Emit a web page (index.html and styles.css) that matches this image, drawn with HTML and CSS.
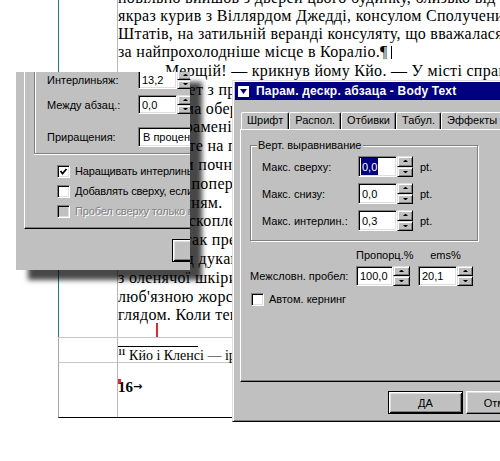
FILE: index.html
```html
<!DOCTYPE html>
<html lang="uk">
<head>
<meta charset="utf-8">
<title>Парам. дескр. абзаца - Body Text</title>
<link rel="stylesheet" href="styles.css">
</head>
<body>
<main class="doc">
  <section class="sheet">
    <div class="gutter"></div>
    <div class="text-col">
      <p class="para first">
        <span class="ln">повільно вийшов з дверей цього будинку, близько від Рудих. Б</span>
        <span class="ln">якраз курив з Віллярдом Джедді, консулом Сполучених</span>
        <span class="ln">Штатів, на затильній веранді консуляту, що вважалася</span>
        <span class="ln">за найпрохолодніше місце в Кораліо.¶<i class="caret"></i></span>
      </p>
      <p class="para second">
        <span class="ln indent">Мерщій! — крикнув йому Кйо. — У місті справжнє свято</span>
        <span class="ln">Везли пакет з пристані, там щось небачене. Ходімо</span>
        <span class="ln">Кожна дама обертається, щоб подивитися на нього</span>
        <span class="ln">Дехто на рамені несе по кошику, і всі кричать</span>
        <span class="ln">Поспішайте на площу, там саме</span>
        <span class="ln">Незабаром почнеться свято</span>
        <span class="ln">І жодного попередження</span>
        <span class="ln">з привітанням.</span>
        <span class="ln">На площі скоплення людей</span>
        <span class="ln">Все було так прекрасно</span>
        <span class="ln">Там, перед дуканом</span>
        <span class="ln">з оленячої шкіри, що сиділи на лавах</span>
        <span class="ln">люб'язною жорстокістю</span>
        <span class="ln">глядом. Коли тепер</span>
      </p>
      <i class="red-mark"></i>
    </div>
  </section>
  <section class="note-row">
    <div class="gutter"></div>
    <div class="note-col">
      <hr class="note-rule">
      <p class="note"><sup>11</sup> Кйо і Кленсі — ірландці</p>
    </div>
  </section>
  <section class="num-row">
    <div class="gutter"></div>
    <div class="num-col"><span class="pin"></span>16<span class="tab-arrow">→</span></div>
  </section>
</main>

<div class="ldlg">
  <div class="lpanel">
    <div class="lgroup">
      <div class="lrow r1">
        <span class="lbl">Интерлиньяж:</span>
        <span class="field w39">13,2</span>
        <span class="spinner"><i class="up"></i><i class="dn"></i></span>
      </div>
      <div class="lrow r2">
        <span class="lbl">Между абзац.:</span>
        <span class="field w39">0,0</span>
        <span class="spinner"><i class="up"></i><i class="dn"></i></span>
      </div>
      <div class="lrow r3">
        <span class="lbl">Приращения:</span>
        <span class="field combo">В процентах</span>
      </div>
    </div>
    <div class="chk-list">
      <div class="chk"><span class="box"><svg viewBox="0 0 9 9" width="9" height="9"><polyline points="1.5,4 3.5,6.5 7.5,2" fill="none" stroke="#000" stroke-width="1.8"/></svg></span>Наращивать интерлиньяж</div>
      <div class="chk"><span class="box"></span>Добавлять сверху, если первая строка</div>
      <div class="chk disabled"><span class="box"></span>Пробел сверху только в начале колонки</div>
    </div>
  </div>
  <div class="lbtns"><span class="btn def">ДА</span></div>
</div>

<div class="dlg">
  <div class="titlebar">
    <span class="sysicon"><svg viewBox="0 0 11 11" width="11" height="11"><rect x="0" y="0" width="11" height="11" fill="#fff"/><polygon points="2,3 9,3 5.5,8" fill="#000080"/></svg></span>
    <span class="title">Парам. дескр. абзаца - Body Text</span>
  </div>
  <div class="tabs">
    <div class="tab">Шрифт</div>
    <div class="tab">Распол.</div>
    <div class="tab">Отбивки</div>
    <div class="tab">Табул.</div>
    <div class="tab">Эффекты</div>
    <div class="tab">Интервалы</div>
  </div>
  <div class="panel">
    <fieldset class="group">
      <legend>Верт. выравнивание</legend>
      <div class="vrow">
        <span class="vlbl">Макс. сверху:</span>
        <span class="field w39"><span class="sel">0,0</span></span>
        <span class="spinner"><i class="up"></i><i class="dn"></i></span>
        <span class="unit">pt.</span>
      </div>
      <div class="vrow">
        <span class="vlbl">Макс. снизу:</span>
        <span class="field w39">0,0</span>
        <span class="spinner"><i class="up"></i><i class="dn"></i></span>
        <span class="unit">pt.</span>
      </div>
      <div class="vrow">
        <span class="vlbl">Макс. интерлин.:</span>
        <span class="field w39">0,3</span>
        <span class="spinner"><i class="up"></i><i class="dn"></i></span>
        <span class="unit">pt.</span>
      </div>
    </fieldset>
    <div class="ws-head">
      <span></span>
      <span class="h-prop">Пропорц.%</span>
      <span class="h-ems">ems%</span>
    </div>
    <div class="ws-row">
      <span class="ws-lbl">Межсловн. пробел:</span>
      <span class="pair"><span class="field w37">100,0</span><span class="spinner s17"><i class="up"></i><i class="dn"></i></span></span>
      <span class="pair"><span class="field w39">20,1</span><span class="spinner"><i class="up"></i><i class="dn"></i></span></span>
    </div>
    <div class="chk kern"><span class="box"></span>Автом. кернинг</div>
  </div>
  <div class="btns">
    <span class="btn def">ДА</span>
    <span class="btn">Отмена</span>
  </div>
</div>
</body>
</html>
```

FILE: styles.css
```css
body {
  margin: 0;
  width: 500px;
  height: 461px;
  overflow: hidden;
  position: relative;
  background: #fff;
  font-family: "Liberation Sans", Arial, sans-serif;
  font-size: 11px;
  color: #000;
}

/* ---------- background document ---------- */
.doc {
  margin-left: 58px;
  width: 480px;
}
.sheet {
  display: grid;
  grid-template-columns: 58px 1fr;
  height: 337px;
  border-left: 1px solid #0d8585;
}
.text-col {
  border-left: 1px solid #b8b8b8;
  overflow: hidden;
  font-family: "Liberation Serif", "Times New Roman", serif;
  font-size: 16px;
  letter-spacing: 0.3px;
  color: #000;
}
.para { margin: 0; }
.ln { display: block; white-space: nowrap; }
.first { line-height: 18px; margin-top: -11.4px; }
.second { line-height: 18.8px; margin-top: 1.4px; }
.indent { text-indent: 47px; }
.caret {
  display: inline-block;
  width: 1px;
  height: 13px;
  margin-left: 3px;
  background: #000;
  vertical-align: -2px;
}
.red-mark {
  display: block;
  width: 2px;
  height: 14px;
  margin-left: 38px;
  margin-top: -2px;
  background: #e0283a;
}

.note-row {
  display: grid;
  grid-template-columns: 58px 1fr;
  box-sizing: border-box;
  height: 25px;
  border-top: 1px solid #c8c8c8;
  border-left: 1px solid #a8a8a8;
}
.note-col { border-left: 1px solid #b8b8b8; }
.note-rule {
  border: 0;
  margin: 8px 0 0;
  width: 80px;
  height: 1px;
  background: #000;
}
.note {
  margin: 2px 0 0;
  font-family: "Liberation Serif", "Times New Roman", serif;
  font-size: 14px;
  line-height: 14px;
  white-space: nowrap;
}
.note sup {
  font-size: 8px;
  font-weight: bold;
  vertical-align: top;
  line-height: 8px;
}

.num-row {
  display: grid;
  grid-template-columns: 58px 1fr;
  box-sizing: border-box;
  height: 56px;
  border-top: 1px solid #c8c8c8;
  border-bottom: 1px solid #000;
  border-left: 1px solid #a8a8a8;
}
.num-col {
  border-left: 1px solid #b8b8b8;
  padding-top: 16px;
  font-family: "Liberation Serif", "Times New Roman", serif;
  font-size: 15px;
  font-weight: bold;
  line-height: 15px;
}
.pin {
  display: inline-block;
  width: 3px;
  height: 5px;
  margin-right: -3px;
  background: #e0283a;
  vertical-align: 8px;
}
.tab-arrow {
  font-size: 11px;
  font-weight: bold;
  font-family: "DejaVu Sans", sans-serif;
  vertical-align: 2px;
}

/* ---------- Win95 pieces ---------- */
.field {
  display: flex;
  align-items: center;
  box-sizing: border-box;
  background: #fff;
  border: 1px solid;
  border-color: #808080 #fff #fff #808080;
  box-shadow: inset 1px 1px #000, inset -1px -1px #dfdfdf;
  padding-left: 3px;
  white-space: nowrap;
  overflow: hidden;
}
.w39 { width: 39px; }
.w37 { width: 37px; }
.sel {
  align-self: stretch;
  display: flex;
  align-items: center;
  margin: 1px 0 1px -1px;
  padding: 0 1px;
  background: #000080;
  color: #fff;
}
.spinner {
  display: flex;
  flex-direction: column;
  flex: none;
  width: 16px;
  align-self: stretch;
}
.spinner.s17 { width: 17px; }
.spinner i {
  flex: 1;
  display: flex;
  align-items: center;
  justify-content: center;
  box-sizing: border-box;
  background: #c0c0c0;
  border: 1px solid;
  border-color: #dfdfdf #000 #000 #dfdfdf;
  box-shadow: inset 1px 1px #fff, inset -1px -1px #808080;
}
.spinner i::after {
  content: "";
  width: 1px;
  height: 0;
  border-left: 2px solid transparent;
  border-right: 2px solid transparent;
}
.spinner .up::after { border-bottom: 2px solid #000; }
.spinner .dn::after { border-top: 2px solid #000; }

.btn {
  display: flex;
  align-items: center;
  justify-content: center;
  box-sizing: border-box;
  width: 75px;
  height: 23px;
  background: #c0c0c0;
  border: 1px solid;
  border-color: #fff #000 #000 #fff;
  box-shadow: inset -1px -1px #808080, inset 1px 1px #dfdfdf;
  font-size: 11px;
}
.btn.def {
  border: 1px solid #000;
  box-shadow: inset 1px 1px #fff, inset -1px -1px #000, inset 2px 2px #dfdfdf, inset -2px -2px #808080;
}

.chk {
  display: flex;
  align-items: center;
  gap: 5px;
  white-space: nowrap;
}
.box {
  flex: none;
  display: flex;
  align-items: center;
  justify-content: center;
  box-sizing: border-box;
  width: 13px;
  height: 13px;
  background: #fff;
  border: 1px solid;
  border-color: #808080 #fff #fff #808080;
  box-shadow: inset 1px 1px #000, inset -1px -1px #dfdfdf;
}
.chk.disabled { color: #808080; text-shadow: 1px 1px 0 #fff; }
.chk.disabled .box { background: #c0c0c0; }

/* ---------- left (cropped) dialog ---------- */
.ldlg {
  position: absolute;
  left: 16px;
  top: 72px;
  width: 174px;
  height: 198px;
  overflow: hidden;
  background: #c0c0c0;
  box-shadow: 12px 10px 5px rgba(0, 0, 0, 0.72);
  display: flex;
  flex-direction: column;
}
.lpanel {
  display: flex;
  flex-direction: column;
  box-sizing: border-box;
  height: 157px;
  margin-left: 8px;
  width: 220px;
  padding-left: 9px;
  border-left: 1px solid #fff;
  border-bottom: 1px solid #000;
  box-shadow: inset 0 -1px #808080;
}
.lgroup {
  display: flex;
  flex-direction: column;
  width: 220px;
  padding: 0 0 6px 12px;
  border-left: 1px solid #808080;
  border-bottom: 1px solid #808080;
  box-shadow: inset 1px 0 #fff, 0 1px 0 #fff;
}
.lrow {
  display: flex;
  align-items: stretch;
  height: 19px;
}
.lrow .lbl {
  width: 91px;
  flex: none;
  display: flex;
  align-items: center;
  white-space: nowrap;
}
.r1 { margin-top: -2px; }
.r2 { margin-top: 6px; }
.r3 { margin-top: 13px; height: 20px; }
.combo { width: 90px; padding-left: 4px; }
.chk-list {
  display: flex;
  flex-direction: column;
  margin-top: 7px;
  margin-left: 23px;
  letter-spacing: -0.15px;
}
.chk-list .chk { height: 20px; }
.lbtns {
  margin-top: 10px;
  margin-left: 156px;
}

/* ---------- right dialog ---------- */
.dlg {
  position: absolute;
  left: 232px;
  top: 80px;
  width: 320px;
  height: 342px;
  box-sizing: border-box;
  display: flex;
  flex-direction: column;
  padding: 1px 3px 3px 2px;
  background: #c0c0c0;
  border: 1px solid;
  border-color: #dfdfdf #000 #000 #dfdfdf;
  box-shadow: inset 1px 1px #fff, inset -1px -1px #808080;
}
.titlebar {
  display: flex;
  align-items: center;
  gap: 7px;
  height: 18px;
  padding-left: 3px;
  background: #000080;
  color: #fff;
  font-size: 12px;
  letter-spacing: 0.2px;
  font-weight: bold;
  white-space: nowrap;
}
.sysicon { display: flex; }
.tabs {
  display: flex;
  align-items: flex-end;
  margin: 12px 0 0 6px;
  height: 17px;
  white-space: nowrap;
}
.tab {
  box-sizing: border-box;
  height: 17px;
  padding: 0 5px;
  line-height: 15px;
  border: 1px solid;
  border-bottom: 0;
  border-color: #fff #000 transparent #fff;
  border-radius: 2px 2px 0 0;
  box-shadow: inset -1px 0 #808080;
}
.panel {
  display: flex;
  flex-direction: column;
  box-sizing: border-box;
  height: 253px;
  margin-left: 5px;
  padding-left: 9px;
  border: 1px solid;
  border-color: #fff #000 #000 #fff;
  box-shadow: inset -1px -1px #808080;
}
.group {
  box-sizing: border-box;
  width: 228px;
  min-width: 0;
  margin: 9px 0 0;
  padding: 4px 8px 9px 11px;
  border: 1px solid #808080;
  box-shadow: 1px 1px 0 #fff, inset 1px 1px 0 #fff;
}
.group legend {
  margin-left: -5px;
  padding: 0 1px;
  line-height: 13px;
  background: #c0c0c0;
}
.vrow {
  display: flex;
  align-items: stretch;
  height: 21px;
}
.vrow + .vrow { margin-top: 6px; }
.vlbl {
  width: 96px;
  flex: none;
  display: flex;
  align-items: center;
  white-space: nowrap;
}
.unit {
  display: flex;
  align-items: center;
  margin-left: 7px;
}
.ws-head,
.ws-row {
  display: grid;
  grid-template-columns: 106px 62px 55px;
  white-space: nowrap;
}
.ws-head {
  margin-top: 7px;
  line-height: 14px;
}
.h-ems { text-align: center; }
.ws-row {
  margin-top: 4px;
  height: 20px;
}
.ws-lbl {
  display: flex;
  align-items: center;
}
.pair { display: flex; }
.kern {
  margin-top: 6px;
  margin-left: 1px;
  height: 14px;
}
.btns {
  display: flex;
  justify-content: flex-end;
  gap: 3px;
  margin-top: 9px;
  margin-right: 7px;
}
```
